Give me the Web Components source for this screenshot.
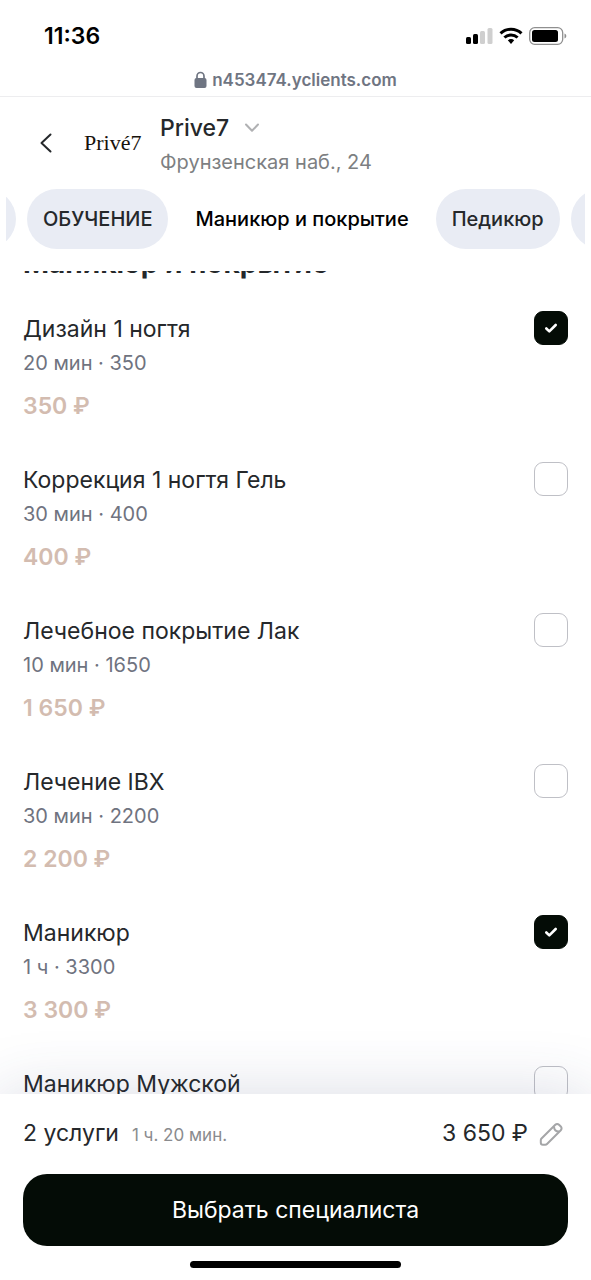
<!DOCTYPE html>
<html lang="ru">
<head>
<meta charset="utf-8">
<meta name="viewport" content="width=device-width, initial-scale=1">
<title>Prive7</title>
<style>
  html, body { height: 100%; }
  body {
    margin: 0;
    background: #fff;
    color: #25282b;
    font-family: Inter, "Liberation Sans", sans-serif;
  }
</style>
</head>
<body>
<booking-app></booking-app>

<script>
const define = (name, html, setup) => {
  const template = document.createElement('template');
  template.innerHTML = html;
  customElements.define(name, class extends HTMLElement {
    connectedCallback() {
      if (this.shadowRoot) return;
      const root = this.attachShadow({ mode: 'open' });
      root.append(template.content.cloneNode(true));
      if (setup) setup(this, root);
    }
  });
};

define('status-bar', `
  <style>
    :host { display: block; border-bottom: 1px solid #ededef; }
    .top { display: flex; justify-content: space-between; align-items: center; height: 48px; padding: 12px 24px 0 44px; }
    time { font-size: 23px; font-weight: 600; line-height: 28px; color: #000; }
    .signs { display: flex; align-items: center; gap: 6px; }
    svg { display: block; }
    .address { display: flex; justify-content: center; align-items: center; gap: 5px; height: 32px; padding-top: 4px; color: #6f7582; font-size: 17px; font-weight: 600; }
  </style>
  <div class="top">
    <time>11:36</time>
    <div class="signs">
      <svg width="27" height="18" viewBox="0 0 27 18" aria-hidden="true">
        <rect x="0" y="10" width="5" height="7" rx="1.5"/><rect x="7" y="7" width="5" height="10" rx="1.5"/>
        <rect x="14" y="4" width="5" height="13" rx="1.5" fill="#cfcfcf"/><rect x="21.500" y="1" width="5" height="16" rx="1.5" fill="#cfcfcf"/>
      </svg>
      <svg width="24" height="18" viewBox="0 0 24 18" fill="none" stroke="#000" stroke-width="3" aria-hidden="true">
        <path d="M1.500 6.400C7.300.9 16.700.9 22.500 6.400"/>
        <path d="M5.400 10.500C9.100 7 14.900 7 18.600 10.500"/>
        <path d="M8.800 13.300C10.500 11.700 13.500 11.700 15.200 13.300L12 17z" fill="#000" stroke="none"/>
      </svg>
      <svg width="38" height="18" viewBox="0 0 38 18" aria-hidden="true">
        <rect x=".7" y=".7" width="33" height="16.600" rx="5" fill="none" stroke="#8f8f8f" stroke-width="1.300"/>
        <rect x="3" y="3" width="26" height="12" rx="2.500"/>
        <path d="M35.500 6.500c2.400.9 2.400 4.100 0 5z" fill="#8f8f8f"/>
      </svg>
    </div>
  </div>
  <div class="address">
    <svg width="13" height="18" viewBox="0 0 13 18" aria-hidden="true">
      <rect x=".5" y="7" width="12" height="10" rx="2" fill="#6f7582"/>
      <path d="M3 8V5.200a3.500 3.700 0 0 1 7 0V8" fill="none" stroke="#6f7582" stroke-width="1.700"/>
    </svg>
    <span>n453474.yclients.com</span>
  </div>
`);

define('salon-header', `
  <style>
    :host { display: flex; align-items: center; height: 92px; padding-left: 32px; }
    button { display: flex; align-items: center; margin: 0; padding: 0; border: 0; background: none; color: inherit; font: inherit; cursor: pointer; }
    .back { width: 28px; height: 36px; justify-content: center; }
    .logo { margin-left: 24px; width: 76px; font-family: "Liberation Serif", serif; font-size: 22px; line-height: 28px; color: #17120c; }
    .name { gap: 15px; font-size: 23px; font-weight: 500; line-height: 32px; padding-top: 2px; }
    .place { font-size: 20px; line-height: 28px; margin-top: 4px; color: #7d7f82; }
  </style>
  <button class="back" aria-label="Назад">
    <svg width="12" height="20" viewBox="0 0 12 20" fill="none" stroke="#25282b" stroke-width="2" stroke-linecap="round" stroke-linejoin="round"><path d="M10.500 1.500L1.500 10l9 8.500"/></svg>
  </button>
  <div class="logo">Privé7</div>
  <div>
    <button class="name">Prive7
      <svg width="16" height="10" viewBox="0 0 16 10" fill="none" stroke="#b0b1b3" stroke-width="2" stroke-linecap="round" stroke-linejoin="round"><path d="M2 1.500l6 6.300 6-6.300"/></svg>
    </button>
    <div class="place">Фрунзенская наб., 24</div>
  </div>
`);

define('category-chip', `
  <style>
    :host { display: block; flex: none; }
    button { display: block; min-width: 64px; height: 60px; margin: 0; padding: 0 16px; border: 0; border-radius: 30px; background: #e9ecf4; color: #25282b; font: inherit; font-size: 20px; font-weight: 500; white-space: nowrap; cursor: pointer; }
    :host([active]) button { background: none; color: #000; }
  </style>
  <button><slot></slot></button>
`, (host, root) => {
  if (host.title) root.querySelector('button').setAttribute('aria-label', host.title);
});

define('category-tabs', `
  <style>
    :host { display: flex; gap: 11px; margin: 0 6px; overflow: hidden; }
  </style>
  <slot></slot>
`);

define('service-item', `
  <style>
    :host { display: flex; justify-content: space-between; align-items: flex-start; height: 151px; }
    label { display: block; font-size: 23px; line-height: 32px; margin-top: 2px; cursor: pointer; }
    .info { font-size: 20px; line-height: 28px; margin-top: 4px; color: #6f7380; }
    .price { font-size: 23px; line-height: 32px; margin-top: 13px; font-weight: 600; color: #d3bcb0; }
    input { appearance: none; flex: none; width: 34px; height: 34px; margin: 0; border: 1px solid #bfc0c6; border-radius: 9px; cursor: pointer; }
    input:checked { border-color: #040c06; background: #040c06; }
    .box { display: grid; }
    .box > * { grid-area: 1 / 1; place-self: center; }
    svg { display: none; pointer-events: none; }
    input:checked + svg { display: block; }
  </style>
  <div>
    <label for="pick"><slot></slot></label>
    <div class="info"></div>
    <div class="price"></div>
  </div>
  <div class="box">
    <input type="checkbox" id="pick">
    <svg width="14" height="12" viewBox="0 0 14 12" fill="none" stroke="#fff" stroke-width="2.600" stroke-linecap="round" stroke-linejoin="round"><path d="M2.300 6.500l3 2.900L11.700 3"/></svg>
  </div>
`, (host, root) => {
  root.querySelector('.info').textContent = host.getAttribute('info') || '';
  root.querySelector('.price').textContent = host.getAttribute('price') || '';
  root.querySelector('input').checked = host.hasAttribute('checked');
});

define('service-list', `
  <style>
    :host { display: block; overflow: hidden; padding: 0 23px; }
    h2 { margin: 0; padding-bottom: 30px; font-size: 28px; line-height: 36px; font-weight: 700; }
  </style>
  <h2><slot name="heading"></slot></h2>
  <slot></slot>
`);

define('booking-footer', `
  <style>
    :host { display: block; padding: 20px 23px 12px; background: #fff; box-shadow: 0 0 60px rgba(50, 60, 110, .18); }
    .sum { display: flex; align-items: baseline; font-size: 23px; line-height: 38px; }
    .time { margin-left: 13px; font-size: 17px; color: #8a8b8e; }
    .total { margin-left: auto; }
    button { margin: 0; padding: 0; border: 0; font: inherit; cursor: pointer; }
    .edit { align-self: center; margin: 0 5px 0 11px; height: 24px; background: none; }
    svg { display: block; }
    .next { display: block; width: 100%; height: 72px; margin-top: 20px; border-radius: 24px; background: #040c06; color: #fff; font-size: 23px; }
    .home { width: 211px; height: 7px; margin: 15px auto 0; border-radius: 4px; background: #000; }
  </style>
  <div class="sum">
    <span>2 услуги</span><span class="time">1 ч. 20 мин.</span>
    <span class="total">3 650 ₽</span>
    <button class="edit" aria-label="Изменить">
      <svg width="24" height="24" viewBox="0 0 24 24" fill="none" stroke="#a5a6a8" stroke-width="2" stroke-linejoin="round"><path d="M1.800 20.500V18.200q0-1 .7-1.700L16.300 2.700a2.600 2.600 0 0 1 3.700 0l1.800 1.800a2.600 2.600 0 0 1 0 3.700L8 22q-.7.700-1.700.7H3.800q-2 0-2-2.200z"/><path d="M15 4.500q0 5 5 5"/></svg>
    </button>
  </div>
  <button class="next">Выбрать специалиста</button>
  <div class="home"></div>
`);

define('booking-app', `
  <style>
    :host { display: flex; flex-direction: column; height: 100vh; overflow: hidden; }
    status-bar, salon-header, category-tabs { flex: none; }
    service-list { flex: 1; min-height: 0; margin-top: 22px; }
    booking-footer { flex: none; z-index: 1; }
  </style>
  <status-bar></status-bar>
  <salon-header></salon-header>
  <category-tabs>
    <category-chip title="Предыдущая категория"></category-chip>
    <category-chip>ОБУЧЕНИЕ</category-chip>
    <category-chip active>Маникюр и покрытие</category-chip>
    <category-chip>Педикюр</category-chip>
    <category-chip title="Следующая категория"></category-chip>
  </category-tabs>
  <service-list>
    <span slot="heading">Маникюр и покрытие</span>
    <service-item info="20 мин · 350" price="350 ₽" checked>Дизайн 1 ногтя</service-item>
    <service-item info="30 мин · 400" price="400 ₽">Коррекция 1 ногтя Гель</service-item>
    <service-item info="10 мин · 1650" price="1 650 ₽">Лечебное покрытие Лак</service-item>
    <service-item info="30 мин · 2200" price="2 200 ₽">Лечение IBX</service-item>
    <service-item info="1 ч · 3300" price="3 300 ₽" checked>Маникюр</service-item>
    <service-item>Маникюр Мужской</service-item>
  </service-list>
  <booking-footer></booking-footer>
`);

// Open with the active category in view and the list scrolled past most of its heading.
const app = document.querySelector('booking-app').shadowRoot;
app.querySelector('category-tabs').scrollLeft = 54;
app.querySelector('service-list').scrollTop = 26;
</script>
</body>
</html>
